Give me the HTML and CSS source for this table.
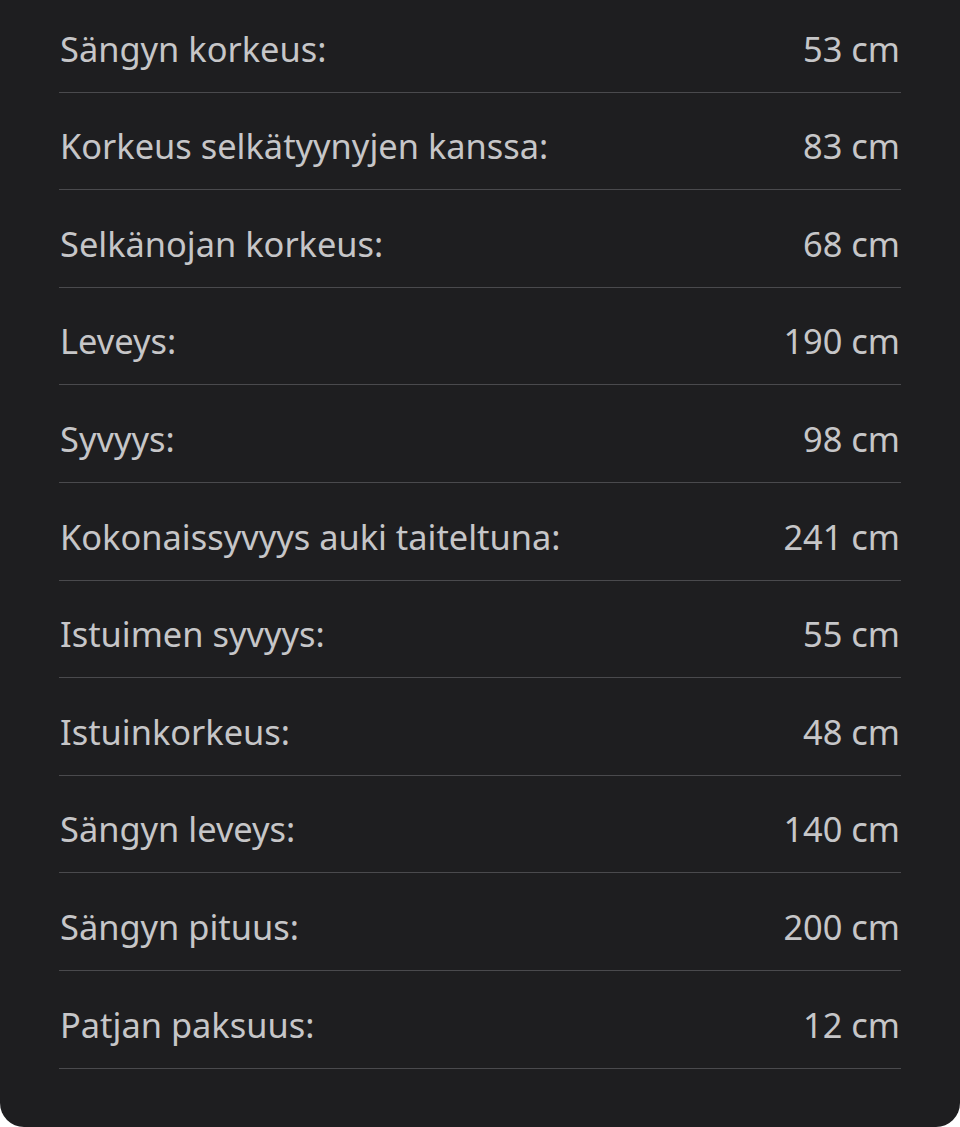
FILE: index.html
```html
<!DOCTYPE html>
<html lang="fi">
<head>
<meta charset="utf-8">
<title>Mitat</title>
<link rel="stylesheet" href="styles.css">
</head>
<body>
<div class="panel">
  <dl class="specs">
    <div class="row"><dt>Sängyn korkeus:</dt><dd>53 cm</dd></div>
    <div class="row"><dt>Korkeus selkätyynyjen kanssa:</dt><dd>83 cm</dd></div>
    <div class="row"><dt>Selkänojan korkeus:</dt><dd>68 cm</dd></div>
    <div class="row"><dt>Leveys:</dt><dd>190 cm</dd></div>
    <div class="row"><dt>Syvyys:</dt><dd>98 cm</dd></div>
    <div class="row"><dt>Kokonaissyvyys auki taiteltuna:</dt><dd>241 cm</dd></div>
    <div class="row"><dt>Istuimen syvyys:</dt><dd>55 cm</dd></div>
    <div class="row"><dt>Istuinkorkeus:</dt><dd>48 cm</dd></div>
    <div class="row"><dt>Sängyn leveys:</dt><dd>140 cm</dd></div>
    <div class="row"><dt>Sängyn pituus:</dt><dd>200 cm</dd></div>
    <div class="row"><dt>Patjan paksuus:</dt><dd>12 cm</dd></div>
  </dl>
</div>
</body>
</html>
```
FILE: styles.css
```css
html, body {
  margin: 0;
  padding: 0;
  background: #ffffff;
}
.panel {
  box-sizing: border-box;
  width: 960px;
  height: 1127px;
  background: #1e1e20;
  border-radius: 0 0 24px 24px;
  padding: 0 59px 0 59px;
  font-family: "Noto Sans", "Open Sans", sans-serif;
  color: #c6c6c8;
}
.specs {
  margin: 0;
  padding: 0;
}
.row {
  display: flex;
  justify-content: space-between;
  align-items: baseline;
  padding: 31.5px 1px 21.1px 1px;
  border-bottom: 1px solid #4a4a4d;
  font-size: 34.4px;
  line-height: 44px;
}
.row:first-child {
  padding-top: 26.6px;
}
.row dt, .row dd {
  margin: 0;
}
```
